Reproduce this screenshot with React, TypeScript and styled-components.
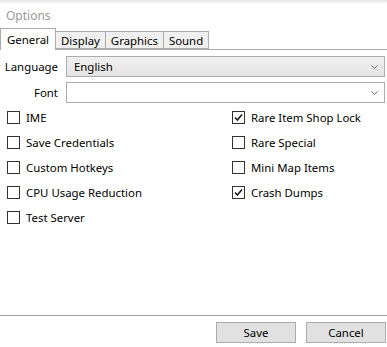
import React from 'react';
import styled, { createGlobalStyle } from 'styled-components';

const GlobalStyle = createGlobalStyle`
  html, body {
    margin: 0;
    padding: 0;
    background: #ffffff;
  }
  body {
    font-family: "Segoe UI", "Noto Sans", "Open Sans", sans-serif;
    font-size: 11.4px;
    color: #000000;
  }
`;

const Window = styled.div`
  width: 387px;
  height: 347px;
  display: flex;
  flex-direction: column;
  overflow: hidden;
  background: #ffffff;
`;

const TopShade = styled.div`
  height: 3px;
  background: linear-gradient(#e6e6e6, #f6f6f6);
`;

const TitleBar = styled.div`
  height: 25px;
  padding-left: 6px;
  display: flex;
  align-items: center;
  color: #9a9a9a;
  font-size: 12px;
`;

const TabStrip = styled.div`
  height: 21px;
  display: flex;
  align-items: flex-end;
  border-bottom: 1px solid #acacac;
`;

const Tab = styled.div<{ $active?: boolean }>`
  box-sizing: border-box;
  height: ${(p) => (p.$active ? '22px' : '18px')};
  margin-bottom: ${(p) => (p.$active ? '-1px' : '0')};
  padding: 0 ${(p) => (p.$active ? '6px' : '5px')};
  display: flex;
  align-items: center;
  border: 1px solid #acacac;
  border-bottom: ${(p) => (p.$active ? 'none' : '1px solid #acacac')};
  margin-left: ${(p) => (p.$active ? '0' : '-1px')};
  background: ${(p) => (p.$active ? '#ffffff' : '#f0f0f0')};
  position: relative;
  z-index: ${(p) => (p.$active ? 1 : 0)};
`;

const Form = styled.div`
  display: grid;
  grid-template-columns: 58px 1fr;
  column-gap: 8px;
  row-gap: 5px;
  padding: 6px 2px 0 0;
`;

const Label = styled.div`
  text-align: right;
  display: flex;
  align-items: center;
  justify-content: flex-end;
`;

const Combo = styled.div<{ $filled?: boolean }>`
  box-sizing: border-box;
  height: 21px;
  border: 1px solid #acacac;
  background: ${(p) => (p.$filled ? 'linear-gradient(#f0f0f0, #e5e5e5)' : '#ffffff')};
  display: flex;
  align-items: center;
  padding: 0 6px 0 7px;
`;

const ComboText = styled.span`
  flex: 1;
`;

const Chevron = () => (
  <svg width="7" height="4" viewBox="0 0 7 4">
    <polyline points="0.5,0.5 3.5,3.3 6.5,0.5" fill="none" stroke="#6a6a6a" strokeWidth="1" />
  </svg>
);

const Checks = styled.div`
  display: grid;
  grid-template-columns: 225px 1fr;
  grid-auto-flow: column;
  grid-template-rows: repeat(5, 25px);
  padding: 2px 0 0 7px;
`;

const CheckRow = styled.div`
  display: flex;
  align-items: center;
  gap: 6px;
`;

const Box = styled.div`
  box-sizing: border-box;
  width: 13px;
  height: 13px;
  border: 1px solid #333333;
  background: #ffffff;
  display: flex;
  align-items: center;
  justify-content: center;
`;

const Spacer = styled.div`
  flex: 1;
`;

const Separator = styled.div`
  height: 1px;
  background: #a0a0a0;
`;

const Footer = styled.div`
  display: flex;
  justify-content: flex-end;
  gap: 10px;
  padding: 6px 1px 4px 0;
`;

const Button = styled.div`
  box-sizing: border-box;
  width: 80px;
  height: 21px;
  border: 1px solid #adadad;
  background: #e1e1e1;
  display: flex;
  align-items: center;
  justify-content: center;
`;

const Tick = () => (
  <svg width="9" height="9" viewBox="0 0 9 9">
    <polyline points="1,4.5 3.4,7 8,1.5" fill="none" stroke="#222222" strokeWidth="1.7" />
  </svg>
);

const CheckItem = (props: { label: string; checked?: boolean }) => (
  <CheckRow>
    <Box>{props.checked && <Tick />}</Box>
    <span>{props.label}</span>
  </CheckRow>
);

const left = ['IME', 'Save Credentials', 'Custom Hotkeys', 'CPU Usage Reduction', 'Test Server'];
const right = [
  { label: 'Rare Item Shop Lock', checked: true },
  { label: 'Rare Special' },
  { label: 'Mini Map Items' },
  { label: 'Crash Dumps', checked: true },
];

export default function App() {
  return (
    <>
      <GlobalStyle />
      <Window>
        <TopShade />
        <TitleBar>Options</TitleBar>
        <TabStrip>
          <Tab $active>General</Tab>
          <Tab>Display</Tab>
          <Tab>Graphics</Tab>
          <Tab>Sound</Tab>
        </TabStrip>
        <Form>
          <Label>Language</Label>
          <Combo $filled>
            <ComboText>English</ComboText>
            <Chevron />
          </Combo>
          <Label>Font</Label>
          <Combo>
            <ComboText />
            <Chevron />
          </Combo>
        </Form>
        <Checks>
          {left.map((l) => (
            <CheckItem key={l} label={l} />
          ))}
          {right.map((r) => (
            <CheckItem key={r.label} label={r.label} checked={r.checked} />
          ))}
        </Checks>
        <Spacer />
        <Separator />
        <Footer>
          <Button>Save</Button>
          <Button>Cancel</Button>
        </Footer>
      </Window>
    </>
  );
}
